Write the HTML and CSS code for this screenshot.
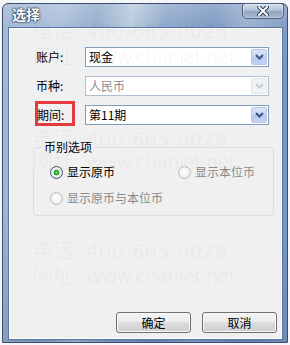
FILE: index.html
```html
<!DOCTYPE html>
<html>
<head>
<meta charset="utf-8">
<link rel="stylesheet" href="styles.css">
</head>
<body>
<div class="window">
  <div class="titlebar">
    <span class="title">选择</span>
    <button class="close" type="button"><svg width="12" height="10" viewBox="0 0 12 10"><path d="M2 1 L10 9 M10 1 L2 9" stroke="#2e3a4e" stroke-width="4" stroke-linecap="square"/><path d="M2 1 L10 9 M10 1 L2 9" stroke="#fff" stroke-width="2" stroke-linecap="square"/></svg></button>
  </div>
  <div class="client">
    <div class="form">
      <label class="lbl">账户:</label>
      <div class="combo"><span>现金</span><span class="arrow"><svg width="9" height="6" viewBox="0 0 9 6"><path d="M1 1 L4.5 4.5 L8 1" fill="none" stroke="#3f5680" stroke-width="2"/></svg></span></div>
      <label class="lbl">币种:</label>
      <div class="combo disabled"><span>人民币</span><span class="arrow"><svg width="9" height="6" viewBox="0 0 9 6"><path d="M1 1 L4.5 4.5 L8 1" fill="none" stroke="#c9cccf" stroke-width="2"/></svg></span></div>
      <label class="lbl marked">期间:</label>
      <div class="combo"><span>第11期</span><span class="arrow"><svg width="9" height="6" viewBox="0 0 9 6"><path d="M1 1 L4.5 4.5 L8 1" fill="none" stroke="#3f5680" stroke-width="2"/></svg></span></div>
    </div>
    <fieldset class="group">
      <legend>币别选项</legend>
      <div class="radios">
        <div class="opt"><span class="radio checked"></span><span>显示原币</span></div>
        <div class="opt off"><span class="radio"></span><span>显示本位币</span></div>
        <div class="opt off wide"><span class="radio"></span><span>显示原币与本位币</span></div>
      </div>
    </fieldset>
    <div class="buttons">
      <button class="btn" type="button">确定</button>
      <button class="btn" type="button">取消</button>
    </div>
  </div>
</div>
<div class="watermark">
  <div class="wm l1">电话: 400-665-0028</div>
  <div class="wm l2">网址: <span class="url">www.chanjet.net</span></div>
  <div class="wm l3">电话: 400-665-0028</div>
  <div class="wm l4">网址: <span class="url">www.chanjet.net</span></div>
  <div class="wm l5">电话: 400-665-0028</div>
  <div class="wm l6">网址: <span class="url">www.chanjet.net</span></div>
</div>
</body>
</html>
```
FILE: styles.css
```css
html, body {
  margin: 0;
  padding: 0;
}
body {
  width: 290px;
  height: 345px;
  overflow: hidden;
  position: relative;
  background: #f4f6f9;
  font-family: "Noto Sans CJK SC", "DejaVu Sans", sans-serif;
  font-size: 12px;
  color: #000;
}
.window {
  margin: 3px 0 0 2px;
  width: 286px;
  height: 340px;
  box-sizing: border-box;
  border: 1px solid #3c4f70;
  border-radius: 6px 6px 0 0;
  padding: 0 5px 3px 6px;
  display: flex;
  flex-direction: column;
  background:
    linear-gradient(to bottom, rgba(255,255,255,0.18), rgba(255,255,255,0) 26px, rgba(30,55,100,0.05) 200px, rgba(30,55,100,0.25)),
    linear-gradient(100deg, #a2b7d3 0%, #abbfd9 18%, #93accd 28%, #b9cade 38%, #8ea8cb 48%, #7e9ac2 62%, #9ab0d0 72%, #7a97c1 86%, #8ba5c9 100%);
}
.titlebar {
  height: 24px;
  margin: 0 -5px 0 -6px;
  padding-left: 9px;
  display: flex;
  justify-content: space-between;
  align-items: flex-start;
}
.title {
  font-size: 14px;
  font-weight: bold;
  line-height: 20px;
  color: #fff;
  text-shadow: 0 0 2px #23334d, 0 0 2px #23334d, 0 0 1px #23334d;
}
.close {
  margin: -1px 3px 0 0;
  width: 42px;
  height: 16px;
  padding: 0;
  border: 1px solid #4a5e80;
  border-radius: 3px 3px 5px 5px;
  background: linear-gradient(#d6e0ec, #b3c3d8 45%, #91a6c2 50%, #a3b7cf);
  box-shadow: inset 0 0 0 1px rgba(255,255,255,0.35);
  display: flex;
  align-items: center;
  justify-content: center;
}
.client {
  flex: 1;
  box-sizing: border-box;
  border: 1px solid #fbfcfd;
  box-shadow: 0 0 0 1px #5877a5;
  background: #f0f0f0;
  display: flex;
  flex-direction: column;
}
.form {
  display: grid;
  grid-template-columns: 49px 184px;
  grid-auto-rows: 20px;
  row-gap: 9px;
  margin: 18px 0 0 26px;
  align-items: center;
}
.lbl {
  line-height: 20px;
  font-size: 12px;
}
.marked {
  position: relative;
  padding-left: 1px;
}
.marked::after {
  content: "";
  position: absolute;
  left: -1px;
  top: -4px;
  width: 40px;
  height: 25px;
  box-sizing: border-box;
  border: 3px solid #e23a3e;
}
.combo {
  height: 20px;
  box-sizing: border-box;
  border: 1px solid #7f9db9;
  background: #fff;
  display: flex;
  align-items: center;
  justify-content: space-between;
  padding-left: 3px;
  line-height: 18px;
}
.arrow {
  width: 16px;
  height: 16px;
  margin-right: 1px;
  box-sizing: border-box;
  border: 1px solid #b6c7ea;
  border-radius: 2px;
  background: linear-gradient(#dbe5f8, #c7d6f4 50%, #b6c9ef 51%, #c4d4f3);
  display: flex;
  align-items: center;
  justify-content: center;
}
.combo.disabled {
  border-color: #afc0d2;
  color: #8c8c8c;
}
.combo.disabled .arrow {
  border-color: #e2e3e5;
  background: #f1f2f3;
}
.group {
  margin: 14px 0 0 23px;
  width: 241px;
  box-sizing: border-box;
  border: 1px solid #d8e0e6;
  border-radius: 3px;
  padding: 0 0 9px 16px;
}
.group legend {
  padding: 0 2px;
  margin-left: -8px;
  line-height: 16px;
  font-size: 12px;
}
.radios {
  display: grid;
  grid-template-columns: 128px auto;
  row-gap: 10px;
  padding-top: 9px;
}
.opt {
  display: flex;
  align-items: center;
  gap: 4px;
  height: 16px;
  line-height: 16px;
}
.opt.wide {
  grid-column: 1 / 3;
}
.opt.off {
  color: #8a8a8a;
}
.radio {
  width: 13px;
  height: 13px;
  box-sizing: border-box;
  border-radius: 50%;
  border: 1px solid #b9bcbf;
  background: radial-gradient(circle at 45% 40%, #ffffff, #eef0f2 60%, #dfe2e5);
}
.radio.checked {
  border-color: #3f5472;
  background:
    radial-gradient(circle, #8fe07d 0, #3fae35 1.6px, #1f8a22 2.6px, rgba(0,0,0,0) 3.2px),
    radial-gradient(circle at 45% 40%, #ffffff, #e6ebf1 60%, #cfd8e2);
}
.buttons {
  margin-top: auto;
  display: flex;
  justify-content: flex-end;
  gap: 11px;
  padding: 0 4px 5px 0;
}
.btn {
  width: 75px;
  height: 21px;
  padding: 0;
  border: 1px solid #707070;
  border-radius: 3px;
  background: linear-gradient(#f3f3f3, #ececec 45%, #dedede 50%, #cfcfcf);
  box-shadow: inset 0 0 0 1px #fbfbfb;
  font-family: "Noto Sans CJK SC", sans-serif;
  font-size: 12px;
  line-height: 17px;
  color: #000;
}
.watermark {
  position: absolute;
  left: 0;
  top: 0;
  width: 290px;
  height: 345px;
  pointer-events: none;
}
.wm {
  position: absolute;
  left: 33px;
  font-family: "DejaVu Sans", "Noto Sans CJK SC", sans-serif;
  font-size: 20px;
  line-height: 24px;
  color: rgba(0,0,0,0.035);
  white-space: nowrap;
}
.url {
  letter-spacing: -1.2px;
}
.l1 { top: 19px; }
.l2 { top: 45px; }
.l3 { top: 127px; }
.l4 { top: 150px; }
.l5 { top: 239px; }
.l6 { top: 264px; }
```
